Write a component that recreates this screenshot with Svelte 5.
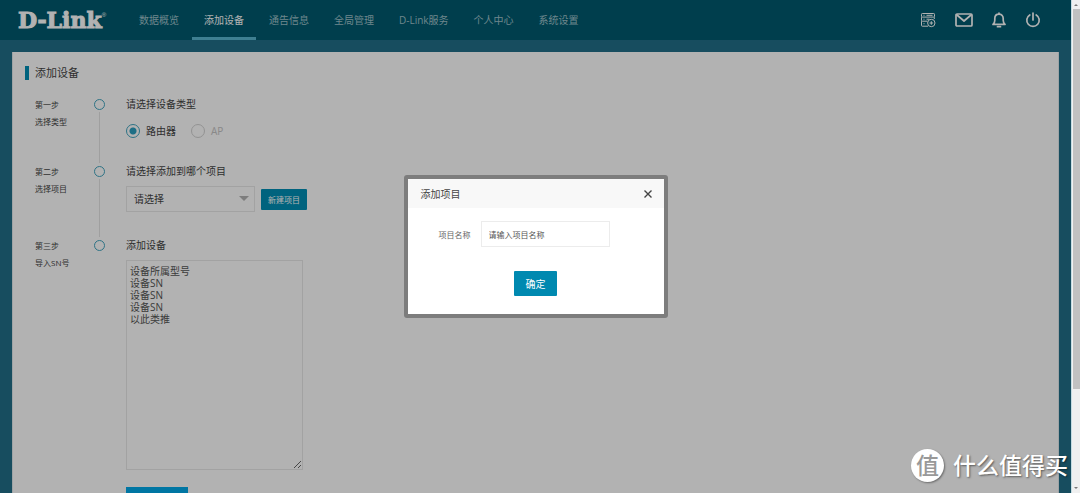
<script lang="ts">
  const navItems = ['数据概览', '添加设备', '通告信息', '全局管理', 'D-Link服务', '个人中心', '系统设置'];

  let activeNav = $state('添加设备');
  let deviceType = $state('router');
  let project = $state('');
  let snList = $state('');
  let projectName = $state('');
  let showModal = $state(true);
</script>

<div class="app">
  <div class="page">
    <header class="header">
      <a class="logo" href="#home">D-Link<sup>®</sup></a>
      <nav class="nav">
        {#each navItems as item}
          <a
            class="nav__item"
            class:nav__item--active={item === activeNav}
            href="#nav"
            onclick={() => (activeNav = item)}>{item}</a
          >
        {/each}
      </nav>
      <div class="tools">
        <button class="tools__button" aria-label="设备">
          <svg width="16" height="16" viewBox="0 0 16 16">
            <rect x="1.5" y="1.5" width="13" height="3.6" rx="0.8" />
            <path d="M14.3 7V5.2M7.500 9.2H2.3a.8.8 0 0 1-.8-.8V5.2M8 14.2H2.3a.8.8 0 0 1-.8-.8V9.2" />
            <path d="M3.5 3.3h1M6.5 3.3h6M3.5 7.2h1M6.5 7.2h3M3.5 11.7h1" />
            <circle cx="11.3" cy="11" r="3.7" />
            <path d="M11.3 9.2v3.6M9.5 11h3.6" />
          </svg>
        </button>
        <button class="tools__button" aria-label="消息">
          <svg class="bold" width="18" height="14" viewBox="0 0 18 14">
            <rect x="1" y="1" width="16" height="12" rx="1" />
            <path d="M2 2l7 6 7-6" />
          </svg>
        </button>
        <button class="tools__button" aria-label="通知">
          <svg class="bold" width="14" height="16" viewBox="0 0 14 16">
            <path d="M7 1v1.2M1 12.400c1.300-1.200 1.800-2.400 1.800-4.200V6.600C2.800 4 4.600 2.200 7 2.200S11.200 4 11.200 6.600v1.600c0 1.800.5 3 1.800 4.200z" />
            <path d="M5.500 14.700h3" />
          </svg>
        </button>
        <button class="tools__button" aria-label="退出">
          <svg class="bold" width="16" height="16" viewBox="0 0 16 16">
            <path d="M8 1v7M4.800 2.900a6.200 6.200 0 1 0 6.400 0" />
          </svg>
        </button>
      </div>
    </header>

    <main class="panel">
      <h1 class="panel__title">添加设备</h1>

      <section class="step">
        <div class="step__label">第一步<br />选择类型</div>
        <div class="step__track"><i class="step__dot"></i></div>
        <div class="step__body">
          <h2>请选择设备类型</h2>
          <div class="radios">
            <label>
              <input type="radio" name="type" value="router" bind:group={deviceType} />路由器
            </label>
            <label class="disabled">
              <input type="radio" name="type" value="ap" disabled bind:group={deviceType} />AP
            </label>
          </div>
        </div>
      </section>

      <section class="step">
        <div class="step__label">第二步<br />选择项目</div>
        <div class="step__track"><i class="step__dot"></i></div>
        <div class="step__body step__body--project">
          <h2><label for="project">请选择添加到哪个项目</label></h2>
          <div class="project">
            <div class="select">
              <select id="project" bind:value={project}>
                <option value="">请选择</option>
              </select>
            </div>
            <button class="project__new" onclick={() => (showModal = true)}>新建项目</button>
          </div>
        </div>
      </section>

      <section class="step">
        <div class="step__label">第三步<br />导入SN号</div>
        <div class="step__track step__track--last"><i class="step__dot"></i></div>
        <div class="step__body">
          <h2><label for="sn">添加设备</label></h2>
          <textarea
            id="sn"
            bind:value={snList}
            placeholder={'设备所属型号\n设备SN\n设备SN\n设备SN\n以此类推'}
          ></textarea>
          <button class="submit" aria-label="提交"></button>
        </div>
      </section>
    </main>

    {#if showModal}
      <div class="overlay">
        <div class="modal" role="dialog" aria-labelledby="modal-title">
          <div class="modal__header">
            <h2 id="modal-title">添加项目</h2>
            <button class="modal__close" aria-label="关闭" onclick={() => (showModal = false)}>
              <svg width="8" height="8" viewBox="0 0 8 8"><path d="M.5.5l7 7M7.5.5l-7 7" /></svg>
            </button>
          </div>
          <div class="modal__field">
            <label for="name">项目名称</label>
            <input id="name" type="text" placeholder="请输入项目名称" bind:value={projectName} />
          </div>
          <button class="modal__confirm" onclick={() => (showModal = false)}>确定</button>
        </div>
      </div>
    {/if}
  </div>

  <div class="scrollbar">
    <span class="scrollbar__arrow"></span>
    <span class="scrollbar__thumb"></span>
    <span class="scrollbar__arrow scrollbar__arrow--down"></span>
  </div>

  <div class="watermark"><span class="watermark__badge">值</span>什么值得买</div>
</div>

<style>
  :global(body) {
    margin: 0;
  }

  .app {
    position: relative;
    display: flex;
    height: 100vh;
    overflow: hidden;
    font-family: 'Open Sans', 'Noto Sans CJK SC', sans-serif;
    font-size: 10px;
    color: #444;
  }

  .app :is(button, input, select, textarea) {
    box-sizing: border-box;
    margin: 0;
    padding: 0;
    border: 0;
    font: inherit;
    color: inherit;
  }

  h1,
  h2 {
    margin: 0;
    font-weight: 400;
  }

  svg {
    display: block;
    fill: none;
    stroke: currentColor;
    stroke-width: 1;
  }

  svg.bold {
    stroke-width: 1.7;
    stroke-linecap: round;
    stroke-linejoin: round;
  }

  .page {
    position: relative;
    flex: 1;
    overflow: hidden;
    background: #226f88;
  }

  .header {
    display: flex;
    height: 40px;
    background: #005a6f;
    color: #fff;
  }

  .logo {
    width: 109px;
    padding-left: 18px;
    box-sizing: border-box;
    margin-right: 18px;
    color: #fff;
    font: bold 22px/40px 'DejaVu Serif', serif;
    text-decoration: none;
    white-space: nowrap;
    -webkit-text-stroke: 1px #fff;
  }

  .logo sup {
    font: 6px/6px 'Liberation Sans', sans-serif;
    vertical-align: 11px;
    -webkit-text-stroke: 0;
  }

  .nav {
    display: flex;
    gap: 1px;
  }

  .nav__item {
    padding: 0 12px;
    border-bottom: 3px solid transparent;
    color: #9fc0c9;
    line-height: 40px;
    height: 37px;
    text-decoration: none;
    white-space: nowrap;
  }

  .nav__item--active {
    border-color: #5ab7d0;
    color: #fff;
  }

  .tools {
    display: flex;
    align-items: center;
    gap: 19px;
    margin-left: auto;
    padding-right: 30px;
  }

  .tools__button {
    background: none;
  }

  .panel {
    margin: 12px;
    padding: 14px 12px 30px;
    border: 1px solid #e2eaec;
    border-width: 0 1px;
    background: #fff;
  }

  .panel__title {
    padding-left: 6px;
    border-left: 4px solid #008fb5;
    margin-bottom: 16px;
    font-size: 11px;
    line-height: 14px;
  }

  .step {
    display: grid;
    grid-template-columns: 59px 11px 1fr;
    padding-left: 10px;
  }

  .step__label {
    font-size: 8px;
    line-height: 17px;
  }

  .step__track {
    display: flex;
    flex-direction: column;
    align-items: center;
    padding-top: 3px;
  }

  .step__track::after {
    content: '';
    flex: 1;
    width: 1px;
    margin-top: 2px;
    background: #e4e4e4;
  }

  .step__track--last::after {
    display: none;
  }

  .step__dot {
    box-sizing: border-box;
    width: 11px;
    height: 11px;
    border: 1px solid #43a5c0;
    border-radius: 50%;
  }

  .step__body {
    padding-left: 21px;
  }

  .step__body h2 {
    font-size: 10px;
    line-height: 17px;
  }

  .radios {
    display: flex;
    gap: 15px;
    padding: 11px 0 25px;
    line-height: 14px;
  }

  .radios label {
    display: flex;
    gap: 6px;
  }

  .radios .disabled {
    color: #c4c4c4;
  }

  .radios input {
    appearance: none;
    width: 14px;
    height: 14px;
    border: 1px solid #43a5c0;
    border-radius: 50%;
  }

  .app .radios input {
    border: 1px solid #43a5c0;
  }

  .radios input:checked {
    background: radial-gradient(#2c9fc0 3px, transparent 4px);
  }

  .app .radios input:disabled {
    border-color: #d2d2d2;
  }

  .step__body--project {
    padding-bottom: 25px;
  }

  .project {
    display: flex;
    align-items: center;
    gap: 6px;
    padding-top: 6px;
  }

  .select {
    position: relative;
  }

  .select::after {
    content: '';
    position: absolute;
    top: 10px;
    right: 6px;
    border: 5px solid transparent;
    border-top-color: #b4b4b4;
    border-bottom: 0;
    pointer-events: none;
  }

  .app .select select {
    display: block;
    appearance: none;
    width: 129px;
    height: 26px;
    padding: 0 7px;
    border: 1px solid #e9e9e9;
    background: none;
  }

  .app .project__new {
    width: 46px;
    height: 21px;
    border-radius: 1px;
    background: #008fb5;
    color: #fff;
    font-size: 8px;
  }

  .app .step__body textarea {
    display: block;
    width: 177px;
    height: 210px;
    margin: 6px 0 17px;
    padding: 4px 3px;
    border: 1px solid #e9e9e9;
    background: none;
    line-height: 12px;
  }

  textarea::placeholder,
  .modal input::placeholder {
    color: #555;
    opacity: 1;
  }

  .app .submit {
    display: block;
    width: 62px;
    height: 26px;
    background: #00a9ea;
    color: #fff;
  }

  .overlay {
    position: absolute;
    inset: 0;
    display: flex;
    align-items: center;
    justify-content: center;
    background: rgba(0, 0, 0, 0.3);
  }

  .modal {
    display: flex;
    flex-direction: column;
    align-items: center;
    width: 256px;
    padding-bottom: 18px;
    border: 4px solid #7d7d7d;
    border-radius: 3px;
    background: #fff;
  }

  .modal__header {
    display: flex;
    align-items: center;
    justify-content: space-between;
    align-self: stretch;
    height: 29px;
    padding: 0 12px 0 13px;
    background: #f8f8f8;
  }

  .modal__header h2 {
    font-size: 10px;
  }

  .modal__close {
    background: none;
  }

  .modal__close svg {
    stroke-width: 1.4;
  }

  .modal__field {
    display: flex;
    align-items: center;
    align-self: stretch;
    gap: 10px;
    margin: 13px 0 24px;
    padding-left: 31px;
    color: #666;
    font-size: 8px;
  }

  .app .modal__field input {
    width: 129px;
    height: 26px;
    padding: 0 7px;
    border: 1px solid #ececec;
  }

  .app .modal__confirm {
    width: 43px;
    height: 25px;
    border-radius: 1px;
    background: #0089b0;
    color: #fff;
  }

  .scrollbar {
    display: flex;
    flex-direction: column;
    align-items: center;
    box-sizing: border-box;
    width: 9px;
    border-left: 1px solid #c5dce2;
    background: #f0f0f0;
  }

  .scrollbar__arrow {
    margin: 4px 0 3px;
    border: 2px solid transparent;
    border-top: 0;
    border-bottom-color: #777;
  }

  .scrollbar__arrow--down {
    margin: auto 0 4px;
    transform: rotate(180deg);
  }

  .scrollbar__thumb {
    width: 7px;
    height: 77%;
    background: #c1c1c1;
  }

  .watermark {
    position: absolute;
    right: 12px;
    bottom: 11px;
    display: flex;
    align-items: center;
    gap: 9px;
    color: #fff;
    font-size: 23px;
    font-weight: 500;
    line-height: 33px;
    text-shadow: 1px 1px 2px rgba(0, 0, 0, 0.5);
    pointer-events: none;
  }

  .watermark__badge {
    width: 33px;
    height: 33px;
    border-radius: 50%;
    background: #fff;
    box-shadow: 1px 1px 2px rgba(0, 0, 0, 0.4);
    color: #999;
    font-style: oblique 8deg;
    text-align: center;
    text-shadow: none;
  }
</style>
